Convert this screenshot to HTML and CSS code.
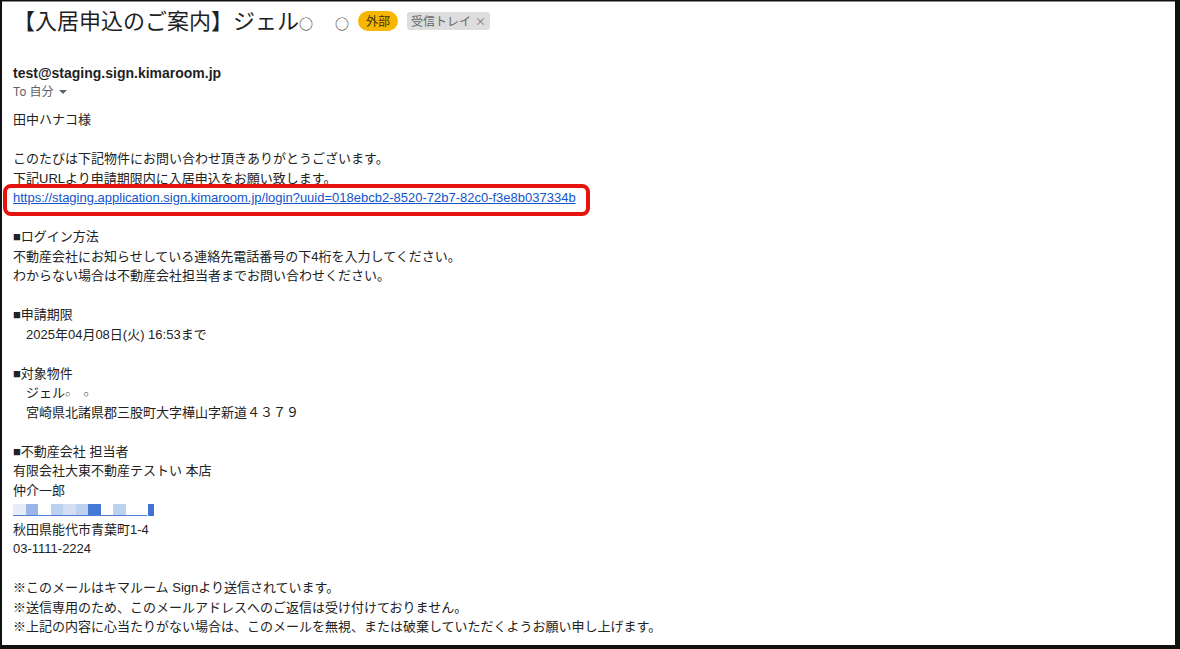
FILE: index.html
```html
<!DOCTYPE html>
<html lang="ja">
<head>
  <meta charset="UTF-8" />
  <title>【入居申込のご案内】ジェル○　○</title>
  <link rel="stylesheet" href="styles.css">
</head>
<body>
  <div class="window">
    <header class="subject">
      <h1>【入居申込のご案内】ジェル<span class="dot">○</span>　<span class="dot">○</span></h1>
      <span class="badge badge-ext">外部</span>
      <span class="badge badge-inbox">受信トレイ <span class="x">×</span></span>
    </header>

    <div class="sender">
      <div class="from">test@staging.sign.kimaroom.jp</div>
      <div class="to">To 自分 <span class="caret"></span></div>
    </div>

    <div class="message">
      <p>田中ハナコ様</p>
      <p class="blank"></p>
      <p>このたびは下記物件にお問い合わせ頂きありがとうございます。</p>
      <p>下記URLより申請期限内に入居申込をお願い致します。</p>
      <p class="link-line"><a href="#">https://staging.application.sign.kimaroom.jp/login?uuid=018ebcb2-8520-72b7-82c0-f3e8b037334b</a></p>
      <p class="blank"></p>
      <p>■ログイン方法</p>
      <p>不動産会社にお知らせしている連絡先電話番号の下4桁を入力してください。</p>
      <p>わからない場合は不動産会社担当者までお問い合わせください。</p>
      <p class="blank"></p>
      <p>■申請期限</p>
      <p>　2025年04月08日(火) 16:53まで</p>
      <p class="blank"></p>
      <p>■対象物件</p>
      <p>　ジェル<span class="dot-sm">○</span>　<span class="dot-sm">○</span></p>
      <p>　宮崎県北諸県郡三股町大字樺山字新道４３７９</p>
      <p class="blank"></p>
      <p>■不動産会社 担当者</p>
      <p>有限会社大東不動産テストい 本店</p>
      <p>仲介一郎</p>
      <p class="redacted">
        <span class="px c1"></span><span class="px c2"></span><span class="px c0"></span><span class="px c3"></span><span class="px c4"></span><span class="px c3"></span><span class="px c5"></span><span class="px c0"></span><span class="px c3"></span><span class="px c0 wide"></span><span class="px c6 thin"></span>
      </p>
      <p>秋田県能代市青葉町1-4</p>
      <p>03-1111-2224</p>
      <p class="blank"></p>
      <p>※このメールはキマルーム Signより送信されています。</p>
      <p>※送信専用のため、このメールアドレスへのご返信は受け付けておりません。</p>
      <p>※上記の内容に心当たりがない場合は、このメールを無視、または破棄していただくようお願い申し上げます。</p>
    </div>
  </div>
</body>
</html>
```

FILE: styles.css
```css
*, *::before, *::after { box-sizing: border-box; margin: 0; padding: 0; }
html, body { height: 100%; }
body {
  background: #111;
  font-family: "Liberation Sans", "Noto Sans CJK JP", sans-serif;
  color: #222;
  overflow: hidden;
}
.window {
  margin: 1px 5px 0 2px;
  height: 644px;
  background: #fff;
  border-top: 1px solid #8a8a8a;
  padding: 5px 11px 0 11px;
}
.subject {
  display: flex;
  align-items: center;
  height: 28px;
}
.subject h1 {
  font-family: "Noto Sans CJK JP", sans-serif;
  font-weight: 400;
  font-size: 22px;
  line-height: 28px;
  color: #1f1f1f;
  margin-right: 9px;
}
.subject .dot { font-size: 14px; }
.badge {
  display: inline-flex;
  align-items: center;
  font-family: "Noto Sans CJK JP", sans-serif;
  font-size: 12px;
  height: 18px;
  line-height: 18px;
}
.badge-ext {
  background: #f6b704;
  color: #3c3000;
  border-radius: 10px;
  padding: 0 8px;
  height: 20px;
  margin-right: 9px;
}
.badge-inbox {
  background: #dddddd;
  color: #666;
  border-radius: 3px;
  padding: 0 4px;
}
.badge-inbox .x { margin-left: 4px; font-size: 11px; color: #777; }

.sender { margin-top: 28px; }
.from {
  font-family: "Liberation Sans", Roboto, sans-serif;
  font-weight: 700;
  font-size: 14px;
  line-height: 20px;
  color: #1f1f1f;
}
.to {
  font-family: Roboto, "Noto Sans CJK JP", sans-serif;
  font-size: 12px;
  line-height: 18px;
  color: #5f6368;
  display: flex;
  align-items: center;
  gap: 4px;
}
.caret {
  width: 0; height: 0;
  border-left: 4px solid transparent;
  border-right: 4px solid transparent;
  border-top: 4px solid #5f6368;
  margin-left: 2px;
}

.message {
  margin-top: 9px;
  font-size: 13px;
  line-height: 19.5px;
  color: #222;
}
.message p { white-space: pre; height: 19.5px; }
.dot-sm { font-size: 9px; }
.message a { color: #1155cc; text-decoration: underline; }

/* annotation drawn over the link line */
.link-line { position: relative; }
.link-line::after {
  content: "";
  position: absolute;
  left: -10px;
  top: -4px;
  width: 587px;
  height: 32px;
  border: 4px solid #e5120e;
  border-radius: 8px;
}

.redacted {
  display: flex;
  align-items: center;
  position: relative;
}
.redacted::after {
  content: "";
  position: absolute;
  left: 0;
  top: 15px;
  width: 134px;
  height: 1px;
  background: #4e7fd8;
}
.px { display: inline-block; width: 12.5px; height: 12px; }
.px.wide { width: 22px; }
.px.thin { width: 6px; }
.c0 { background: #fff; }
.c1 { background: #e6edf8; }
.c2 { background: #9ab6e8; }
.c3 { background: #bcd0f0; }
.c4 { background: #d3def5; }
.c5 { background: #4579d6; }
.c6 { background: #3f73d6; }
```
